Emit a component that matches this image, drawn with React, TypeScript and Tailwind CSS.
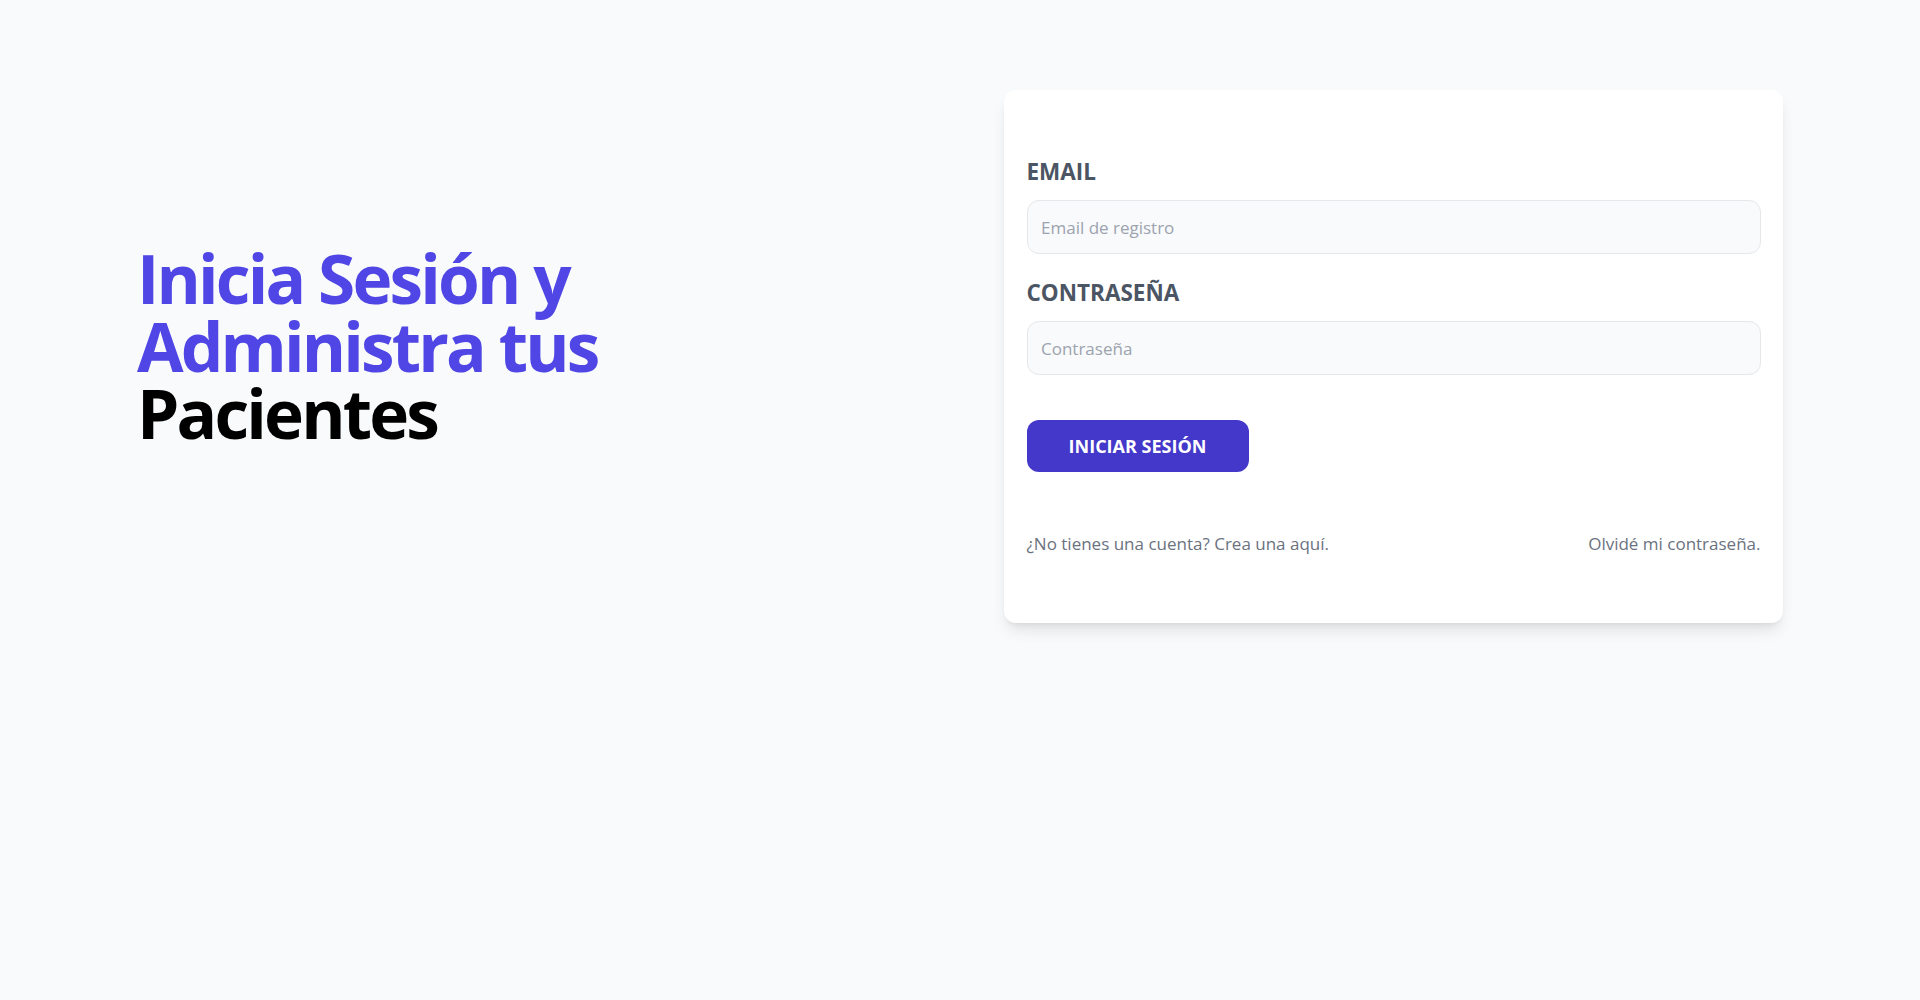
import React, { useState } from 'react';

export default function App() {
  const [email, setEmail] = useState('');
  const [password, setPassword] = useState('');

  return (
    <div className="min-h-screen bg-[#f9fafb] font-['Open_Sans',sans-serif]">
      <main className="grid grid-cols-2 gap-[88px] px-[137px] pt-[90px] items-start">
        {/* Heading */}
        <div className="mt-[155px]">
          <h1 className="max-w-[700px] text-[67.5px] leading-[67.5px] font-bold tracking-[-0.042em] text-[#4f46e5]">
            Inicia Sesión y Administra tus <span className="text-black">Pacientes</span>
          </h1>
        </div>

        {/* Card */}
        <div className="h-[533px] bg-white rounded-xl shadow-lg px-[22.5px] pt-[66px]">
          <form onSubmit={e => e.preventDefault()}>
            <div>
              <label className="block uppercase text-[#4b5563] text-[22.5px] leading-[31.5px] font-bold">
                Email
              </label>
              <input
                type="email"
                placeholder="Email de registro"
                value={email}
                onChange={e => setEmail(e.target.value)}
                className="mt-[12.5px] w-full h-[54px] px-[13.5px] border border-[#e5e7eb] bg-[#f9fafb] rounded-xl text-[17px] outline-none placeholder:text-[#9ca3af]"
              />
            </div>
            <div className="mt-[23px]">
              <label className="block uppercase text-[#4b5563] text-[22.5px] leading-[31.5px] font-bold">
                Contraseña
              </label>
              <input
                type="password"
                placeholder="Contraseña"
                value={password}
                onChange={e => setPassword(e.target.value)}
                className="mt-[12.5px] w-full h-[54px] px-[13.5px] border border-[#e5e7eb] bg-[#f9fafb] rounded-xl text-[17px] outline-none placeholder:text-[#9ca3af]"
              />
            </div>
            <button
              type="submit"
              className="mt-[45px] w-[222px] h-[52px] bg-[#4338ca] rounded-xl text-white uppercase font-bold text-[18px]"
            >
              Iniciar Sesión
            </button>
          </form>

          <nav className="mt-[58px] flex justify-between text-[#6b7280] text-[17px] leading-[27px]">
            <a href="#">¿No tienes una cuenta? Crea una aquí.</a>
            <a href="#">Olvidé mi contraseña.</a>
          </nav>
        </div>
      </main>
    </div>
  );
}
